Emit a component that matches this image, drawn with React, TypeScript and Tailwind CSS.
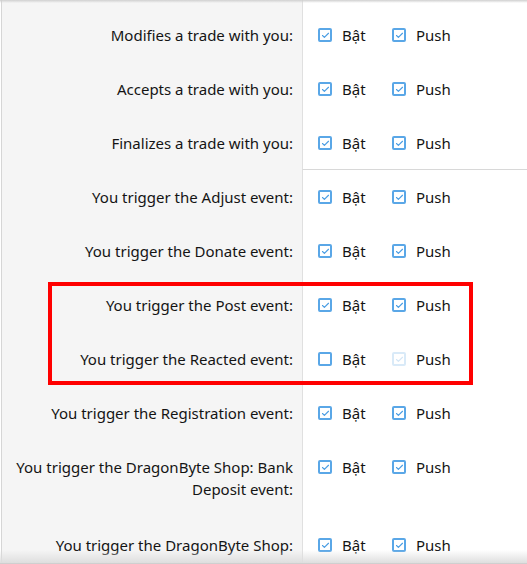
import { Check } from 'lucide-react'

type Row = { label: string[]; on: boolean; push: boolean; pushDisabled?: boolean }

const groupA: Row[] = [
  { label: ['Modifies a trade with you:'], on: true, push: true },
  { label: ['Accepts a trade with you:'], on: true, push: true },
  { label: ['Finalizes a trade with you:'], on: true, push: true },
]

const groupB: Row[] = [
  { label: ['You trigger the Adjust event:'], on: true, push: true },
  { label: ['You trigger the Donate event:'], on: true, push: true },
  { label: ['You trigger the Post event:'], on: true, push: true },
  { label: ['You trigger the Reacted event:'], on: false, push: true, pushDisabled: true },
  { label: ['You trigger the Registration event:'], on: true, push: true },
  { label: ['You trigger the DragonByte Shop: Bank', 'Deposit event:'], on: true, push: true },
  { label: ['You trigger the DragonByte Shop:'], on: true, push: true },
]

function Box({ checked, disabled }: { checked: boolean; disabled?: boolean }) {
  return (
    <span
      className={
        'flex h-[14px] w-[14px] shrink-0 items-center justify-center rounded-[2px] border-2 bg-white ' +
        (disabled ? 'border-[#d9eaf8]' : 'border-[#5aa7e7]')
      }
    >
      {checked && (
        <Check
          className={disabled ? 'h-[9px] w-[9px] text-[#d3e6f6]' : 'h-[9px] w-[9px] text-[#4a9de3]'}
          strokeWidth={3}
        />
      )}
    </span>
  )
}

function FormRow({ row, last }: { row: Row; last?: boolean }) {
  const multi = row.label.length > 1
  return (
    <div className="flex">
      <div
        className={
          'w-[300px] shrink-0 bg-[#f5f5f5] pt-4 pr-[9px] text-right leading-[22px] ' +
          (multi ? 'pb-[18px]' : 'pb-4')
        }
      >
        {row.label.map((l) => (
          <div key={l}>{l}</div>
        ))}
      </div>
      <div
        className={
          'flex flex-1 items-start border-l border-[#e0e0e0] pt-4 pl-[15px] ' +
          (last ? 'border-b border-b-[#d8d8d8] pb-[15px]' : 'pb-4')
        }
      >
        <label className="flex h-[22px] w-[74px] items-center gap-[10px]">
          <Box checked={row.on} />
          <span>Bật</span>
        </label>
        <label className="flex h-[22px] items-center gap-[10px]">
          <Box checked={row.push} disabled={row.pushDisabled} />
          <span>Push</span>
        </label>
      </div>
    </div>
  )
}

export default function App() {
  return (
    <div
      className="relative h-[564px] w-[527px] overflow-hidden bg-white text-[15px] text-[#141414]"
      style={{ fontFamily: '"Segoe UI", "Noto Sans", "Open Sans", sans-serif' }}
    >
      <div className="ml-px border-l border-[#d6d6d6]">
        <div className="flex h-2">
          <div className="w-[300px] bg-[#f5f5f5]" />
          <div className="flex-1 border-l border-[#e0e0e0]" />
        </div>
        {groupA.map((r, i) => (
          <FormRow key={r.label[0]} row={r} last={i === groupA.length - 1} />
        ))}
        <div className="relative">
          {groupB.map((r) => (
            <FormRow key={r.label[0]} row={r} />
          ))}
          <div className="pointer-events-none absolute left-[46px] top-[112px] h-[103px] w-[425px] border-4 border-[#ff0000]" />
        </div>
      </div>
      <div className="pointer-events-none absolute inset-x-0 top-0 h-[3px] bg-gradient-to-b from-[#d0d0d0] to-transparent" />
      <div className="pointer-events-none absolute inset-x-0 bottom-0 h-[14px] border-b border-[#cfcfcf] bg-gradient-to-b from-transparent to-[#dedede]" />
    </div>
  )
}
